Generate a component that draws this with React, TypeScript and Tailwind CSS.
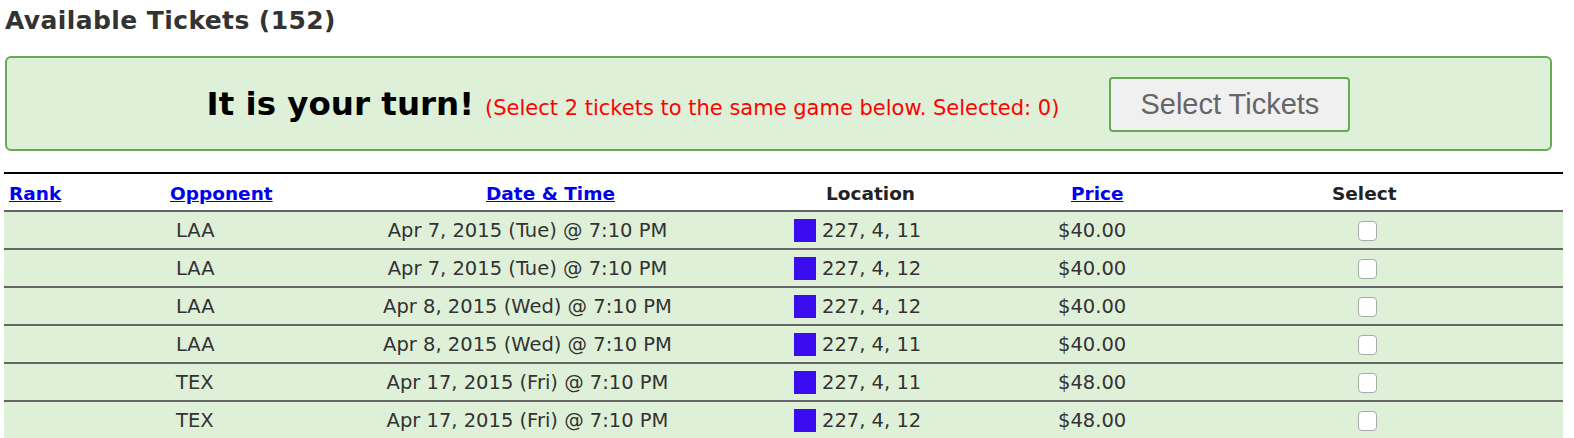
import React from "react";

const rows = [
  { opp: "LAA", date: "Apr 7, 2015 (Tue) @ 7:10 PM", loc: "227, 4, 11", price: "$40.00" },
  { opp: "LAA", date: "Apr 7, 2015 (Tue) @ 7:10 PM", loc: "227, 4, 12", price: "$40.00" },
  { opp: "LAA", date: "Apr 8, 2015 (Wed) @ 7:10 PM", loc: "227, 4, 12", price: "$40.00" },
  { opp: "LAA", date: "Apr 8, 2015 (Wed) @ 7:10 PM", loc: "227, 4, 11", price: "$40.00" },
  { opp: "TEX", date: "Apr 17, 2015 (Fri) @ 7:10 PM", loc: "227, 4, 11", price: "$48.00" },
  { opp: "TEX", date: "Apr 17, 2015 (Fri) @ 7:10 PM", loc: "227, 4, 12", price: "$48.00" },
];

const font = { fontFamily: '"DejaVu Sans", Verdana, sans-serif' };

function HeadLink({ children }: { children: React.ReactNode }) {
  return <a href="#" className="text-[#0000ee] underline font-bold">{children}</a>;
}

export default function App() {
  return (
    <div className="bg-white min-h-[438px] pl-[4px] pt-[6px] text-[#333]" style={font}>
      <h2 className="text-[25px] font-bold leading-[30px] tracking-[0.4px] text-[#333] pl-[1px]">Available Tickets (152)</h2>

      <div className="mt-[20px] ml-[1px] w-[1547px] h-[95px] rounded-[6px] border-2 border-[#67a955] bg-[#dff0d8] flex items-center justify-center pt-[2px]">
        <div className="flex items-baseline">
          <span className="text-[32.5px] font-bold text-black">It is your turn!</span>
          <span className="text-[21px] text-[#ff0000] ml-[11px]">(Select 2 tickets to the same game below. Selected: 0)</span>
        </div>
        <button
          className="ml-[50px] w-[241px] h-[55px] rounded-[4px] border-2 border-[#67a955] bg-[#f0f0f0] text-[29px] text-[#666]"
          style={{ fontFamily: '"Liberation Sans", Arial, sans-serif' }}
        >
          Select Tickets
        </button>
      </div>

      <div className="mt-[21px] w-[1559px] border-t-2 border-black">
        <div className="flex h-[36px] items-center pt-[3px] text-[18.5px] font-bold">
          <div className="w-[156px] pl-[5px]"><HeadLink>Rank</HeadLink></div>
          <div className="w-[175px] pl-[10px]"><HeadLink>Opponent</HeadLink></div>
          <div className="w-[385px] text-center pl-[46px]"><HeadLink>Date &amp; Time</HeadLink></div>
          <div className="w-[290px] pl-[106px] text-[#222]">Location</div>
          <div className="w-[160px] pl-[61px]"><HeadLink>Price</HeadLink></div>
          <div className="flex-1 pl-[162px] text-[#222]">Select</div>
        </div>
        {rows.map((r, i) => (
          <div key={i} className="flex h-[38px] items-center pt-[1px] border-t-2 border-[#666] bg-[#dff0d8] text-[19.5px]">
            <div className="w-[156px]" />
            <div className="w-[175px] pl-[16px]">{r.opp}</div>
            <div className="w-[385px] text-center">{r.date}</div>
            <div className="w-[290px] pl-[74px] flex items-center">
              <span className="inline-block w-[22px] h-[23px] bg-[#3c0cf0] mr-[6px]" />
              {r.loc}
            </div>
            <div className="w-[160px] pl-[48px]">{r.price}</div>
            <div className="flex-1 pl-[188px] flex items-center">
              <input type="checkbox" className="appearance-none w-[19px] h-[20px] rounded-[4px] border border-[#aaa] bg-white" />
            </div>
          </div>
        ))}
      </div>
    </div>
  );
}
